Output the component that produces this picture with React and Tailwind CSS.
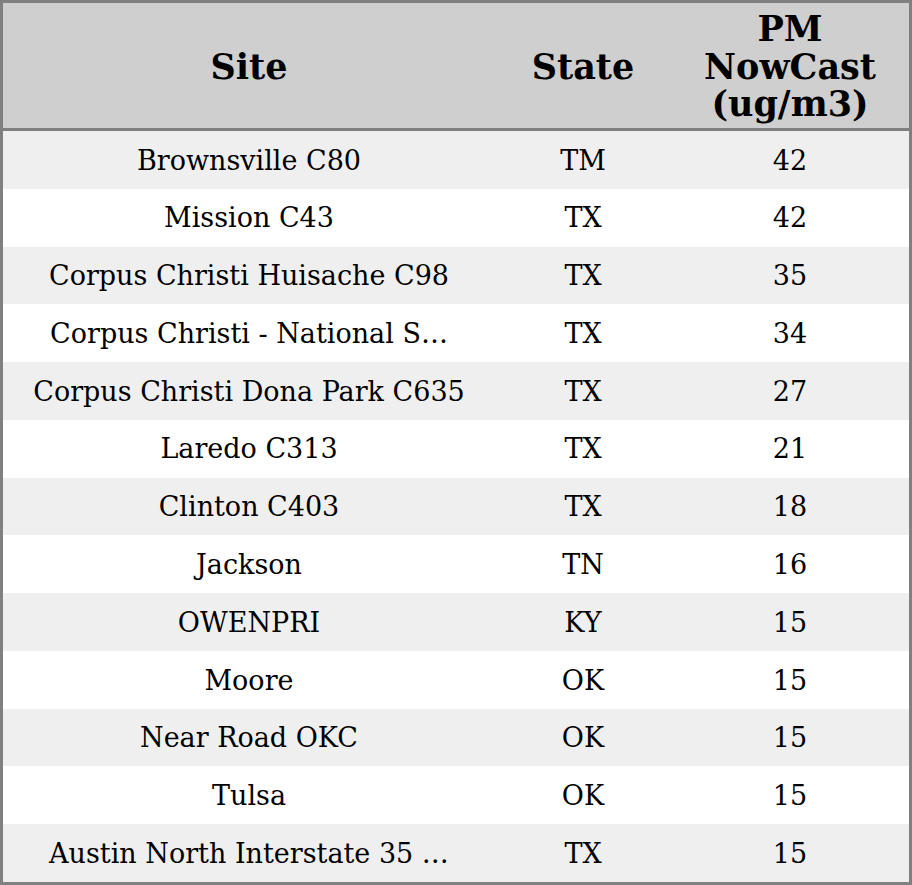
const rows = [
  ["Brownsville C80", "TM", "42"],
  ["Mission C43", "TX", "42"],
  ["Corpus Christi Huisache C98", "TX", "35"],
  ["Corpus Christi - National S…", "TX", "34"],
  ["Corpus Christi Dona Park C635", "TX", "27"],
  ["Laredo C313", "TX", "21"],
  ["Clinton C403", "TX", "18"],
  ["Jackson", "TN", "16"],
  ["OWENPRI", "KY", "15"],
  ["Moore", "OK", "15"],
  ["Near Road OKC", "OK", "15"],
  ["Tulsa", "OK", "15"],
  ["Austin North Interstate 35 …", "TX", "15"],
];

const App = () => {
  return (
    <div
      className="w-[912px] h-[885px] border-[3px] border-[#808080] flex flex-col text-black"
      style={{ fontFamily: '"DejaVu Serif", serif' }}
    >
      {/* Header */}
      <div className="h-[128px] shrink-0 grid grid-cols-[492px_176px_1fr] bg-[#cfcfcf] border-b-[3px] border-[#808080] text-[35px] font-bold leading-[37.5px] pt-[2px]">
        <div className="flex items-center justify-center text-center">Site</div>
        <div className="flex items-center justify-center text-center">State</div>
        <div className="flex items-center justify-center text-center">
          PM
          <br />
          NowCast
          <br />
          (ug/m3)
        </div>
      </div>

      {/* Body */}
      <div className="flex-1 flex flex-col text-[27px]">
        {rows.map(([site, state, value], i) => (
          <div
            key={site}
            className={`flex-1 grid grid-cols-[492px_176px_1fr] pt-[2px] ${
              i % 2 === 0 ? "bg-[#efefef]" : "bg-white"
            }`}
          >
            <div className="flex items-center justify-center whitespace-nowrap">{site}</div>
            <div className="flex items-center justify-center">{state}</div>
            <div className="flex items-center justify-center">{value}</div>
          </div>
        ))}
      </div>
    </div>
  );
};

export default App;
